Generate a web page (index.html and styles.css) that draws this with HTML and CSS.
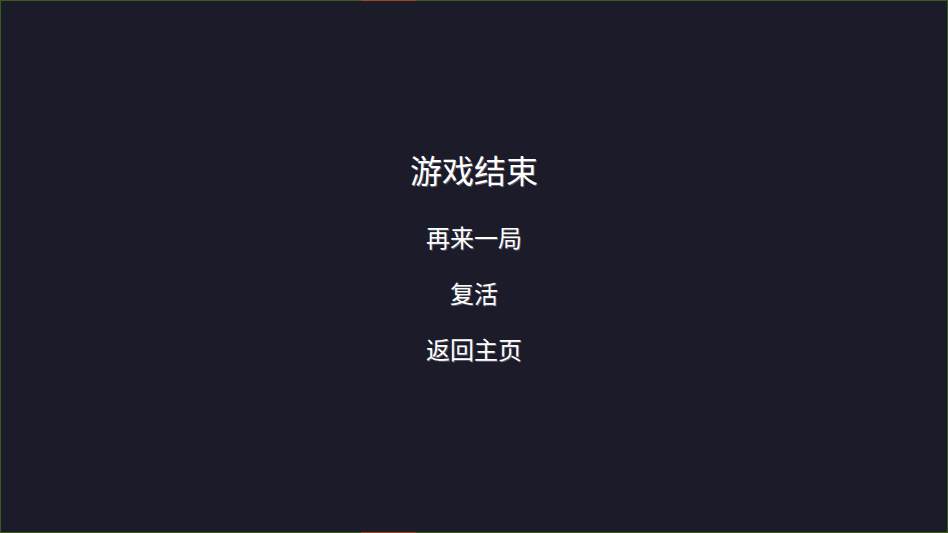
FILE: index.html
```html
<!DOCTYPE html>
<html lang="zh-CN">
<head>
<meta charset="utf-8">
<title>游戏结束</title>
<link rel="stylesheet" href="styles.css">
</head>
<body>
<div class="frame">
  <div class="topline"><span class="seg"></span></div>
  <div class="screen">
    <div class="menu">
      <h1 class="title">游戏结束</h1>
      <div class="items">
        <div class="item">再来一局</div>
        <div class="item">复活</div>
        <div class="item">返回主页</div>
      </div>
    </div>
  </div>
  <div class="bottomline"><span class="seg"></span></div>
</div>
</body>
</html>
```
FILE: styles.css
```css
html, body {
  margin: 0;
  padding: 0;
  width: 948px;
  height: 533px;
  overflow: hidden;
  background: #1b1b2a;
}
.frame {
  width: 948px;
  height: 533px;
  display: flex;
  flex-direction: column;
  background: #3c5a1c;
  box-sizing: border-box;
  padding: 0 1px;
}
.topline, .bottomline {
  height: 1px;
  flex: none;
  position: relative;
}
.topline .seg, .bottomline .seg {
  position: absolute;
  top: 0;
  left: 360px;
  width: 55px;
  height: 1px;
  background: #9a4a24;
}
.screen {
  flex: 1;
  background: #1b1b2a;
  display: flex;
  justify-content: center;
}
.menu {
  padding-top: 152px;
  display: flex;
  flex-direction: column;
  align-items: center;
  font-family: "Noto Sans CJK SC", "Noto Sans", sans-serif;
  color: #ffffff;
  text-shadow: 1px 1px 0 #5a5a66;
}
.title {
  margin: 0;
  font-size: 32px;
  line-height: 32px;
  font-weight: 400;
}
.items {
  margin-top: 40px;
  display: flex;
  flex-direction: column;
  align-items: center;
  gap: 32px;
}
.item {
  font-size: 24px;
  line-height: 24px;
  font-weight: 400;
}
```
